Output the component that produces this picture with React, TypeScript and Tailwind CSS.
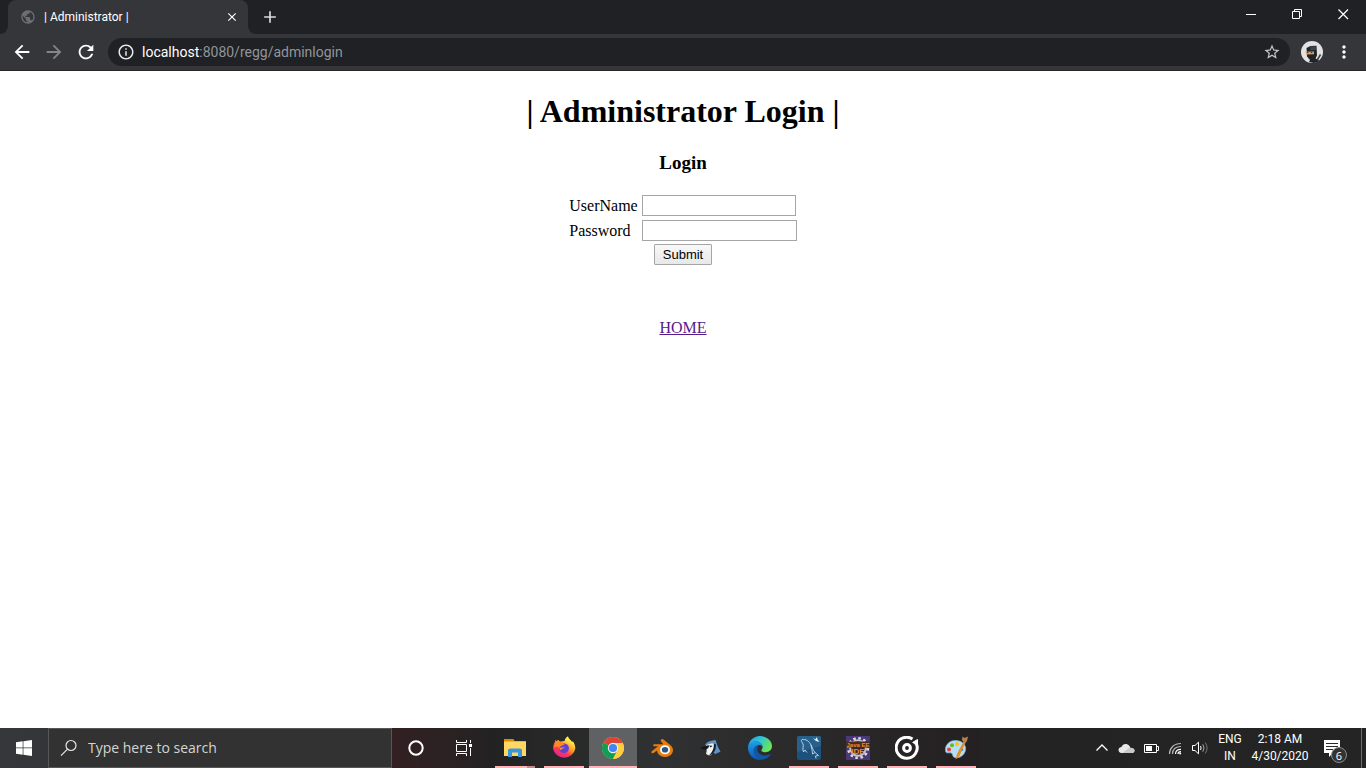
import type { ReactNode } from "react";
import {
  MdAdd,
  MdArrowBack,
  MdArrowForward,
  MdClose,
  MdInfoOutline,
  MdMoreVert,
  MdPublic,
  MdRefresh,
  MdStarBorder,
} from "react-icons/md";

function WindowButton({ label, children }: { label: string; children: ReactNode }) {
  return (
    <button type="button" aria-label={label} className="flex h-7 w-[46px] items-center justify-center">
      <svg width="11" height="11" viewBox="0 0 11 11" fill="none" stroke="#fff" aria-hidden="true">
        {children}
      </svg>
    </button>
  );
}

function TabStrip() {
  return (
    <div className="flex h-[34px] items-start bg-[#202124] text-white">
      <div className="flex h-full items-end">
        <svg width="8" height="8" viewBox="0 0 8 8" fill="#35363a" aria-hidden="true">
          <path d="M8 0v8H0a8 8 0 0 0 8-8z" />
        </svg>
        <div className="flex h-full w-60 items-center rounded-t-lg bg-[#35363a] pr-2 pl-3">
          <MdPublic size={16} color="#6b6f74" />
          <span className="ml-2 flex-1 font-[Roboto,sans-serif] text-xs">| Administrator |</span>
          <button type="button" aria-label="Close tab" className="flex size-4 items-center justify-center">
            <MdClose size={14} stroke="currentColor" />
          </button>
        </div>
        <svg width="8" height="8" viewBox="0 0 8 8" fill="#35363a" aria-hidden="true">
          <path d="M0 0v8h8a8 8 0 0 1-8-8z" />
        </svg>
      </div>
      <button type="button" aria-label="New tab" className="flex h-full w-7 items-center justify-center text-[#dadce0]">
        <MdAdd size={20} />
      </button>
      <div className="ml-auto flex">
        <WindowButton label="Minimize">
          <path d="M0 5.500h10" />
        </WindowButton>
        <WindowButton label="Restore">
          <path d="M.5 2.500h7v7h-7zM2.500 2.500v-2h7v7h-2" />
        </WindowButton>
        <WindowButton label="Close">
          <path d="M.5.5l9.500 9.500M10 .5L.5 10" strokeWidth="1.200" />
        </WindowButton>
      </div>
    </div>
  );
}

function Avatar() {
  return (
    <svg width="22" height="22" viewBox="0 0 22 22" aria-hidden="true">
      <circle cx="11" cy="11" r="11" fill="#e2e2e2" />
      <path d="M5.500 7l4-2 6-.2.500 9.700-1.500 3 3.500 1.500-1 1.800-4 1.200-5-1 1-2-3-3.500z" fill="#202327" />
      <path d="M9 5.500l6-.2-.2 3.700-5.300.5z" fill="#3c434a" />
      <path d="M4.500 10.800l8.500-.3v2.800l-8 .2z" fill="#dc9f70" />
      <path d="M6 11.700h1.500M9.800 11.600h1.500" stroke="#3a2a22" />
      <path d="M19.500 13.500l-3.500 6" stroke="#3c3e42" strokeWidth="1.500" />
    </svg>
  );
}

function Toolbar() {
  return (
    <div className="flex h-[37px] items-center border-b border-[#282629] bg-[#35363a] pr-3 pl-[11px] text-white">
      <div className="flex gap-[10px]">
        <button type="button" aria-label="Back" className="flex w-[22px] justify-center">
          <MdArrowBack size={22} />
        </button>
        <button type="button" aria-label="Forward" className="flex w-[22px] justify-center text-[#85868a]">
          <MdArrowForward size={22} />
        </button>
        <button type="button" aria-label="Reload" className="flex w-[22px] justify-center">
          <MdRefresh size={22} />
        </button>
      </div>
      <div className="ml-[11px] flex h-7 flex-1 items-center rounded-full bg-[#202124] px-[9px]">
        <MdInfoOutline size={18} color="#e8eaed" />
        <div className="ml-[7px] flex-1 font-[Roboto,sans-serif] text-sm text-[#8f959b]">
          <span className="text-white">localhost</span>:8080/regg/adminlogin
        </div>
        <button type="button" aria-label="Bookmark this page" className="text-[#c4c7cb]">
          <MdStarBorder size={18} />
        </button>
      </div>
      <button type="button" aria-label="Profile" className="ml-[11px]">
        <Avatar />
      </button>
      <button type="button" aria-label="Menu" className="ml-[11px]">
        <MdMoreVert size={20} />
      </button>
    </div>
  );
}

function LoginPage() {
  return (
    <main className="flex flex-1 flex-col items-center bg-white font-['Liberation_Serif',serif] text-black">
      <h1 className="mt-[22px] text-[32px] leading-[37px] font-bold">| Administrator Login |</h1>
      <h3 className="mt-[22px] text-[19px] leading-[22px] font-bold">Login</h3>
      <form className="mt-[21px] flex flex-col items-center" onSubmit={(event) => event.preventDefault()}>
        <div className="grid grid-cols-[auto_auto] items-center gap-x-1 gap-y-1 text-base leading-[21px]">
          <label htmlFor="username">UserName</label>
          <input id="username" type="text" className="h-[21px] w-[154px] border border-[#a6a6a6] px-px" />
          <label htmlFor="password">Password</label>
          <input id="password" type="password" className="h-[21px] w-[155px] border border-[#a6a6a6] px-px" />
        </div>
        <button
          type="submit"
          className="mt-[3px] h-[21px] w-[58px] rounded-[1px] border border-[#a6a6a6] bg-linear-to-b from-[#f8f8f8] to-[#e8e8e8] font-['Liberation_Sans',sans-serif] text-[13px] leading-[18px]"
        >
          Submit
        </button>
      </form>
      <a href="#home" className="mt-[54px] text-base leading-[18px] text-[#551a8b] underline">
        HOME
      </a>
    </main>
  );
}

function ExplorerIcon() {
  return (
    <svg width="24" height="24" viewBox="0 0 24 24" aria-hidden="true">
      <path d="M1 3h9l1.500 2H23v15H1z" fill="#f0b429" />
      <path d="M1 3h9l1.500 2H1z" fill="#d98c00" />
      <path d="M1 6h22v14H1z" fill="#ffd763" />
      <path d="M5 21v-7.500L7 12.500h10l2 1V21h-4v-4.500H9V21z" fill="#3a96dd" />
    </svg>
  );
}

function FirefoxIcon() {
  return (
    <svg width="24" height="24" viewBox="0 0 24 24" aria-hidden="true">
      <defs>
        <linearGradient id="fox" x1="0.800" y1="0.100" x2="0.250" y2="0.950">
          <stop offset="0.100" stopColor="#fff04a" />
          <stop offset="0.450" stopColor="#ff9425" />
          <stop offset="0.700" stopColor="#ff3a4e" />
          <stop offset="1" stopColor="#e3209a" />
        </linearGradient>
      </defs>
      <path
        d="M12.500 5c.5-2.500 2-4 3.500-4.700.3 2.500 3 3.700 4 5.700l.8-.8c1.500 2 2.500 4.500 2.500 7.300A11.300 11 0 0 1 1 12.500C1 10 1.500 8 3 6L3.200 4l1.600 1.200L6 3.700l2 2z"
        fill="url(#fox)"
      />
      <circle cx="12" cy="12.300" r="4.900" fill="#6240d8" />
      <path d="M7.200 11c1 1.500 3 .5 5.500.2-1 1.600-3.500 1.500-4 3-.8-.8-1.500-2-1.500-3.200z" fill="#ff9a2e" />
      <path d="M3 6c2-1 4-.8 6-.3l2.500-1-.8 2.500 2 1.500c-2 .5-3.500.8-5 2.300-1.500 0-4-1-5.700 1.500z" fill="#ff8a20" />
    </svg>
  );
}

function ChromeIcon() {
  return (
    <svg width="24" height="24" viewBox="0 0 24 24" aria-hidden="true">
      <circle cx="12" cy="12" r="11" fill="#ffcd41" />
      <path d="M12 12L21.530 6.500A11 11 0 0 0 2.470 6.500z" fill="#db4437" />
      <path d="M12 12L2.470 6.500A11 11 0 0 0 12 23l4.330-8.500z" fill="#0f9d58" />
      <path d="M12 7h9.800A11 11 0 0 1 12 23l4.330-8.500z" fill="#ffcd41" />
      <circle cx="12" cy="12" r="5.200" fill="#f1f1f1" />
      <circle cx="12" cy="12" r="4.100" fill="#4285f4" />
    </svg>
  );
}

function BlenderIcon() {
  return (
    <svg width="24" height="24" viewBox="0 0 24 24" aria-hidden="true">
      <path
        d="M11.300 3.500c.7-.6 1.500-.5 2.200.1l7 5.600c1.500 1.200 2.500 2.900 2.500 4.800 0 4-3.600 7-8 7s-7.900-3-7.900-6.500L3.500 17c-1 .8-2.800-.1-2-1.400L8 10.300H4.200c-1.400 0-1.400-2 .2-2h9L11.300 5.700c-.7-.6-.7-1.500 0-2.200z"
        fill="#e87d0d"
      />
      <ellipse cx="15" cy="13.800" rx="5" ry="4.500" fill="#fff" />
      <ellipse cx="15" cy="13.800" rx="3.200" ry="2.800" fill="#265787" />
    </svg>
  );
}

function BirdIcon() {
  return (
    <svg width="24" height="24" viewBox="0 0 24 24" aria-hidden="true">
      <path d="M6 8.500C8.500 5.500 12 4.500 16.500 4c1.500 4 2.500 8 5 11.500-1.500 1-3.500 1.700-5.500 2.500z" fill="#5f93c4" />
      <path d="M7.500 9c3-1.500 7-2 9-1 .8 4-1.500 8-4 11-2.500.8-4.500 0-5.500-1.500 1-2 .8-3.500 0-5z" fill="#f3f3f0" />
      <path d="M1.500 12c1.500-1.200 3-1.500 4.500-1.600L9.500 9l.5 2-2.500 2.500c-2 .3-4-.3-6-1.500z" fill="#14171a" />
      <path d="M10 9.500l3.500.3-1.800 1.700z" fill="#14171a" />
      <path d="M14.800 7.500l2 .5c.8 4-1 8-3.800 10.500l-3 .8c3-2.500 5.300-7 4.800-11.800z" fill="#16222f" />
    </svg>
  );
}

function EdgeIcon() {
  return (
    <svg width="24" height="24" viewBox="0 0 24 24" aria-hidden="true">
      <defs>
        <linearGradient id="edge-top" x1="0" y1="0" x2="1" y2="0.500">
          <stop offset="0" stopColor="#2498e0" />
          <stop offset="0.500" stopColor="#31c4d4" />
          <stop offset="1" stopColor="#67e554" />
        </linearGradient>
        <linearGradient id="edge-left" x1="0" y1="0" x2="0" y2="1">
          <stop offset="0" stopColor="#1fa1e6" />
          <stop offset="1" stopColor="#0a55b5" />
        </linearGradient>
      </defs>
      <path d="M0 11.500C.5 5 5.500 0 12 0s12 4.500 12 10c0 4-3 6.200-6.500 6.200-2.500 0-4.200-.8-4.200-1.700s1.300-1.300 1.300-3.500c0-3-3-5.500-6.600-5.500S1 7.500 0 11.500z" fill="url(#edge-top)" />
      <path d="M0 12c0-4 3.500-6.700 8-6.700 4 0 6.600 2.700 6.600 5.500-1-1.300-2-1.800-3.300-1.800C8.500 9 6.500 12 6.500 15c0 4 3 7.500 7 8.800C6 24.800 0 19 0 12z" fill="url(#edge-left)" />
      <path d="M11.300 9c-1.500 1-2 2.500-2 4.200 0 4 4 6.300 7.900 6.300 2 0 3.800-.7 5-1.400.4-.2.700.1.400.5-1.800 3-5.100 5-9.100 5.200-4.500-.8-8-4.600-8-9.300C5.500 11.500 8 9 11.300 9z" fill="#1157a8" />
    </svg>
  );
}

function DolphinIcon() {
  return (
    <svg width="24" height="24" viewBox="0 0 24 24" fill="none" aria-hidden="true">
      <rect width="24" height="24" rx="2" fill="#1d517d" />
      <path d="M0 2a2 2 0 0 1 2-2h20a2 2 0 0 1 2 2v8L0 16z" fill="#28608c" />
      <path
        d="M5 3.500c4-.5 7 1.500 9 5.500 1.300 2.800 2 5 4 7.500l3.500 3-3 .5.500 2.500M5 3.500c-1.500 1 0 2.500 1 4.500 1 2-1 5 .5 8l1.500-2 2 2.500M14 9c.5 3 1.500 6 1.500 9l2.500-1.500"
        stroke="#c7dae6"
        strokeWidth="0.900"
      />
      <path d="M16 2l2.500 1.200L20 1l.5 2.500L22.500 6l-3.500-1z" fill="#f2f5f7" />
    </svg>
  );
}

function EclipseIcon() {
  return (
    <svg width="24" height="24" viewBox="0 0 24 24" aria-hidden="true">
      <rect width="24" height="24" fill="#4b3878" />
      <circle cx="12" cy="12" r="9.800" fill="none" stroke="#dcd9d8" strokeWidth="2.600" strokeDasharray="2.600 2.530" />
      <circle cx="12" cy="12" r="7.800" fill="#37262d" stroke="#c9c5c4" strokeWidth="2" />
      <rect y="5.500" width="24" height="6" fill="#472c24" />
      <g fill="#f08a24" fontFamily="'Liberation Sans', sans-serif" fontWeight="700" textAnchor="middle">
        <text x="12" y="11" fontSize="6">Java EE</text>
        <text x="12" y="17.700" fontSize="8">IDE</text>
      </g>
    </svg>
  );
}

function GrooveIcon() {
  return (
    <svg width="24" height="24" viewBox="0 0 24 24" fill="none" stroke="#fff" aria-hidden="true">
      <path d="M17.500 3A10.500 10.500 0 1 0 21.500 8" strokeWidth="3" />
      <circle cx="12" cy="12" r="3.400" strokeWidth="3" />
      <path d="M17.500 6.500L22.500 3.500v5l-1.500 1" fill="#fff" stroke="#fff" strokeWidth="1" />
    </svg>
  );
}

function PaintIcon() {
  return (
    <svg width="24" height="24" viewBox="0 0 24 24" aria-hidden="true">
      <path d="M1.500 15C.5 9 6 4 12 4.500c6 0 10.500 4.500 9.500 9.500-1 5.500-6.500 9-11 7.500-2.800-1-1-3.800-3.500-4.500-2.500-.6-5 1-5.500-2z" fill="#b9ddf2" stroke="#7aafce" strokeWidth="0.700" />
      <circle cx="5" cy="13.500" r="2" fill="#e34234" />
      <circle cx="8" cy="9.300" r="2" fill="#67b82f" />
      <circle cx="13" cy="8" r="2" fill="#f5c518" />
      <circle cx="17.500" cy="13.500" r="1.800" fill="#3879c5" />
      <path d="M19.500 5.500L13 18l-1.500 5.500 4-3.500L21.500 6.500z" fill="#e48d25" />
      <path d="M18 4l.5-3.500 2 1.500L24 .5l-1 4.500-2 2.500z" fill="#b38252" />
    </svg>
  );
}

type Mark = "none" | "open" | "stacked" | "active";

const apps: { name: string; icon: ReactNode; mark: Mark }[] = [
  { name: "File Explorer", icon: <ExplorerIcon />, mark: "stacked" },
  { name: "Firefox", icon: <FirefoxIcon />, mark: "open" },
  { name: "Google Chrome", icon: <ChromeIcon />, mark: "active" },
  { name: "Blender", icon: <BlenderIcon />, mark: "none" },
  { name: "Bluebird", icon: <BirdIcon />, mark: "none" },
  { name: "Microsoft Edge", icon: <EdgeIcon />, mark: "none" },
  { name: "MySQL Workbench", icon: <DolphinIcon />, mark: "open" },
  { name: "Eclipse", icon: <EclipseIcon />, mark: "open" },
  { name: "Groove Music", icon: <GrooveIcon />, mark: "open" },
  { name: "Paint", icon: <PaintIcon />, mark: "open" },
];

const markClass: Record<Mark, string> = {
  none: "w-10",
  open: "w-10 bg-[#ffb3b8]",
  stacked: "w-10 border-r-8 border-[#c08a8f] bg-[#ffb3b8]",
  active: "w-12 bg-[#ffb3b8]",
};

function AppButton({ name, icon, mark }: { name: string; icon: ReactNode; mark: Mark }) {
  return (
    <button
      type="button"
      aria-label={name}
      className={`flex h-10 w-12 flex-col items-center justify-between pt-2 ${mark === "active" ? "bg-[#606162]" : ""}`}
    >
      {icon}
      <span className={`h-0.5 ${markClass[mark]}`} />
    </button>
  );
}

function Tray() {
  return (
    <div className="ml-auto flex h-full items-center text-white">
      <div className="flex items-center gap-[9px]">
        <svg width="14" height="16" viewBox="0 0 14 16" fill="none" stroke="#fff" strokeWidth="1.300" aria-hidden="true">
          <path d="M1.500 10.500L7 5l5.500 5.500" />
        </svg>
        <svg width="17" height="16" viewBox="0 0 17 16" aria-hidden="true">
          <path d="M.5 10c0-1.700 1.500-3 3-3C4.500 4 8.500 2.500 11.500 6l1 2c2.500-.3 4 1 4 2.500S15.500 13 14 13H3.500C1.500 13 .5 11.500.5 10z" fill="#e9e9e9" />
          <path d="M10.500 8.300c2.500-1.500 6 .2 6 2.300 0 1.500-1 2.400-2.500 2.400H4.500z" fill="#c9c9c9" />
        </svg>
        <svg width="15" height="16" viewBox="0 0 15 16" fill="none" aria-hidden="true">
          <path d="M.5 4.500h12v8H.5zM13 6.500h1.500v4H13" stroke="#fff" />
          <path d="M2 6h6v5H2z" fill="#fff" />
        </svg>
        <svg width="15" height="16" viewBox="0 0 15 16" fill="none" stroke="#b7b7b7" strokeWidth="1.200" aria-hidden="true">
          <path d="M1.500 14C1.500 8 6 3.500 13 3.500M4.500 14c0-4.500 3-7.500 8.500-7.500" />
          <path d="M7.500 14c0-3 2-4.700 5.500-4.700M10 14c0-1.500 1.200-2.300 3-2.300" stroke="#fff" />
          <circle cx="12.200" cy="13.500" r="1" fill="#fff" stroke="none" />
        </svg>
        <svg width="17" height="16" viewBox="0 0 17 16" fill="none" stroke="#fff" aria-hidden="true">
          <path d="M.5 5.500h2.500l3.500-3.300v11.600L3 10.500H.5zM8.500 6q1.300 2 0 4" />
          <path d="M10.800 4.300q2.500 3.700 0 7.400" stroke="#aaa" />
          <path d="M13.200 2.500q3.800 5.500 0 11" stroke="#777" />
        </svg>
      </div>
      <div className="ml-[9px] w-6 text-center font-[Roboto,sans-serif] text-xs leading-[17px]">
        ENG
        <br />
        IN
      </div>
      <div className="ml-2 w-[60px] text-center font-[Roboto,sans-serif] text-xs leading-[17px]">
        2:18 AM
        <br />
        4/30/2020
      </div>
      <button type="button" aria-label="6 new notifications" className="relative ml-[13px] h-10 w-[38px]">
        <svg width="26" height="28" viewBox="0 0 26 28" aria-hidden="true">
          <path d="M1 6h16v13h-7l-4 4v-4H1z" fill="#fff" />
          <path d="M3 9.500h12M3 12.500h12M3 15.500h7" stroke="#2a2a2a" />
        </svg>
        <span className="absolute top-[19px] left-2 flex size-4 items-center justify-center rounded-full border border-[#8c8c8c] bg-[#333] text-[11px] leading-none">
          6
        </span>
      </button>
      <div className="mr-1 h-full w-px bg-[#6b6b6b]" />
    </div>
  );
}

function Taskbar() {
  return (
    <div className="flex h-10 items-center bg-linear-to-r from-[#35373a] from-0% via-[#222222] via-38% to-[#242424] text-white">
      <button type="button" aria-label="Start" className="flex h-full w-12 items-center justify-center">
        <svg width="16" height="16" viewBox="0 0 16 16" fill="#fff" aria-hidden="true">
          <path d="M0 2.200L6.700 1.300v6.300H0zM7.400 1.200L16 0v7.600H7.400zM0 8.300h6.700v6.400L0 13.800zM7.400 8.300H16V16l-8.600-1.200z" />
        </svg>
      </button>
      <label className="flex h-full w-[344px] items-center border border-[#575757] bg-[#323232] pl-[11px]">
        <svg width="18" height="18" viewBox="0 0 18 18" fill="none" stroke="#e6e6e6" strokeWidth="1.200" aria-hidden="true">
          <circle cx="11" cy="6.500" r="5" />
          <path d="M7.500 10.200L1 16.700" />
        </svg>
        <input
          type="search"
          aria-label="Search"
          placeholder="Type here to search"
          className="ml-[10px] w-60 bg-transparent text-sm outline-none placeholder:text-[#d4d4d4]"
        />
      </label>
      <div className="flex h-full bg-linear-to-r from-[#332022] to-[#242223]">
        <button type="button" aria-label="Cortana" className="flex h-full w-12 items-center justify-center">
          <svg width="16" height="16" viewBox="0 0 16 16" fill="none" stroke="#fff" strokeWidth="2" aria-hidden="true">
            <circle cx="8" cy="8" r="6.700" />
          </svg>
        </button>
        <button type="button" aria-label="Task View" className="flex h-full w-12 items-center justify-center">
          <svg width="17" height="16" viewBox="0 0 17 16" fill="none" stroke="#fff" aria-hidden="true">
            <path d="M.5 0v2.500h10V0M.5 4.500h10v7H.5zM.5 16v-2.500h10V16M14.500 0v3M14.500 8v8" />
            <path d="M13 4h3v3h-3z" fill="#fff" stroke="none" />
          </svg>
        </button>
      </div>
      <div className="flex gap-px bg-linear-to-r from-[#222222] via-[#303132] via-35% to-[#242021] pl-[3px]">
        {apps.map((app) => (
          <AppButton key={app.name} {...app} />
        ))}
      </div>
      <Tray />
    </div>
  );
}

export default function App() {
  return (
    <div className="flex min-h-screen flex-col font-['Open_Sans','Noto_Sans',sans-serif]">
      <TabStrip />
      <Toolbar />
      <LoginPage />
      <Taskbar />
    </div>
  );
}
